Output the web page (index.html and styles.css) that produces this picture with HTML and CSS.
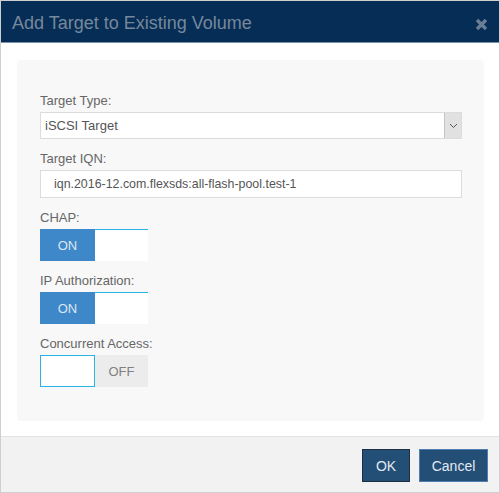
FILE: index.html
```html
<!DOCTYPE html>
<html>
<head>
<meta charset="utf-8">
<link rel="stylesheet" href="styles.css">
</head>
<body>
<div class="dialog">
  <div class="header">
    <span class="title">Add Target to Existing Volume</span>
    <svg class="close" width="13" height="13" viewBox="0 0 13 13"><path d="M2 2L11 11M11 2L2 11" stroke="#6a7e96" stroke-width="3.4" stroke-linecap="butt"/></svg>
  </div>
  <div class="body">
    <div class="panel">
      <div class="group">
        <div class="label">Target Type:</div>
        <div class="select">
          <span class="select-text">iSCSI Target</span>
          <span class="arrow"><svg width="9" height="6" viewBox="0 0 9 6"><path d="M1 1L4.5 4.5L8 1" fill="none" stroke="#555" stroke-width="1"/></svg></span>
        </div>
      </div>
      <div class="group">
        <div class="label">Target IQN:</div>
        <div class="input">iqn.2016-12.com.flexsds:all-flash-pool.test-1</div>
      </div>
      <div class="group">
        <div class="label">CHAP:</div>
        <div class="toggle"><span class="on">ON</span><span class="blank-on"></span></div>
      </div>
      <div class="group">
        <div class="label">IP Authorization:</div>
        <div class="toggle"><span class="on">ON</span><span class="blank-on"></span></div>
      </div>
      <div class="group last">
        <div class="label">Concurrent Access:</div>
        <div class="toggle"><span class="blank-off"></span><span class="off">OFF</span></div>
      </div>
    </div>
  </div>
  <div class="footer">
    <button class="btn btn-ok">OK</button>
    <button class="btn btn-cancel">Cancel</button>
  </div>
</div>
</body>
</html>
```
FILE: styles.css
```css
html, body {
  margin: 0;
  padding: 0;
  background: #ffffff;
}
.dialog {
  width: 500px;
  height: 493px;
  box-sizing: border-box;
  border: 1px solid #cfcfcf;
  display: flex;
  flex-direction: column;
  font-family: "Liberation Sans", Arial, sans-serif;
}
.header {
  height: 41px;
  background: #052d56;
  border-bottom: 1px solid #7b92ab;
  display: flex;
  align-items: center;
  justify-content: space-between;
  padding: 0 11px 0 11px;
  flex-shrink: 0;
}
.title {
  font-size: 18px;
  color: #77889b;
  margin-top: 4px;
}
.close {
  margin-top: 5px;
}
.body {
  padding: 17px 15px 15px 16px;
  flex: 1;
  background: #fff;
}
.panel {
  background: #f8f8f8;
  border-radius: 4px;
  padding: 33px 22px 34px 23px;
}
.group {
  margin-bottom: 12px;
}
.group.last {
  margin-bottom: 0;
}
.label {
  font-size: 13px;
  line-height: 16px;
  color: #666;
  margin-bottom: 3px;
}
.select {
  height: 27px;
  box-sizing: border-box;
  border: 1px solid #dcdcdc;
  background: #fff;
  display: flex;
  align-items: center;
  justify-content: space-between;
}
.select-text {
  font-size: 13px;
  color: #555;
  padding-left: 4px;
}
.arrow {
  width: 17px;
  height: 25px;
  box-sizing: border-box;
  background: #e1e1e1;
  border-left: 1px solid #c4c4c4;
  display: flex;
  align-items: center;
  justify-content: center;
}
.input {
  height: 28px;
  box-sizing: border-box;
  border: 1px solid #dcdcdc;
  background: #fff;
  font-size: 12.4px;
  color: #555;
  line-height: 26px;
  padding-left: 13px;
}
.toggle {
  display: flex;
  width: 108px;
  height: 32px;
}
.on {
  width: 55px;
  background: #3e87c9;
  color: #dde8f3;
  font-size: 13px;
  display: flex;
  align-items: center;
  justify-content: center;
}
.blank-on {
  width: 53px;
  background: #fff;
  border-top: 1px solid #27b5e6;
  box-sizing: border-box;
}
.blank-off {
  width: 55px;
  background: #fff;
  border: 1px solid #27b5e6;
  box-sizing: border-box;
}
.off {
  width: 53px;
  background: #ececec;
  color: #808080;
  font-size: 13px;
  display: flex;
  align-items: center;
  justify-content: center;
}
.footer {
  height: 56px;
  flex-shrink: 0;
  background: #f2f2f2;
  border-top: 1px solid #e2e2e2;
  display: flex;
  justify-content: flex-end;
  align-items: flex-start;
  padding: 12px 11px 0 0;
  gap: 9px;
  box-sizing: border-box;
}
.btn {
  height: 33px;
  background: #234e76;
  color: #e2e9f0;
  font-family: "Liberation Sans", Arial, sans-serif;
  font-size: 14px;
  padding: 0;
  box-sizing: border-box;
}
.btn-ok {
  width: 48px;
  border: 1px solid #1d2f40;
}
.btn-cancel {
  width: 69px;
  border: 1px solid #4f7fb2;
}
```
